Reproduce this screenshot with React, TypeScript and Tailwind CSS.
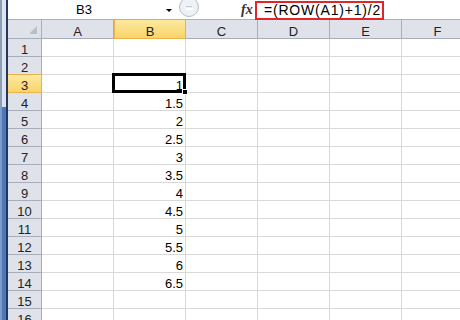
const cols = ["A", "B", "C", "D", "E", "F"];

const values: Record<number, string> = {
  3: "1",
  4: "1.5",
  5: "2",
  6: "2.5",
  7: "3",
  8: "3.5",
  9: "4",
  10: "4.5",
  11: "5",
  12: "5.5",
  13: "6",
  14: "6.5",
};

const rows = Array.from({ length: 16 }, (_, i) => i + 1);

const FormulaBar = () => (
  <div className="flex h-[20px] items-start">
    <div className="flex h-full items-start border-b border-[#a9b2bd]">
      <div className="w-[152px] text-center text-[13px] leading-[20px] text-black">B3</div>
      <div className="ml-[6px] mt-[9px] h-0 w-0 border-x-[3px] border-t-[3px] border-x-transparent border-t-black" />
      <div className="ml-[7px] -mt-[3px] flex h-[20px] w-[20px] items-center justify-center rounded-full border border-[#b4bdc8] bg-[#eef1f5]">
        <div className="mt-[1px] flex flex-col items-center gap-[1px]">
          <div className="h-[1px] w-[6px] bg-[#c4cad2]" />
          <div className="h-[2px] w-[7px] bg-white" />
        </div>
      </div>
      <div className="ml-[42px] w-[14px] font-['Liberation_Serif',serif] text-[14px] font-bold italic leading-[19px] text-[#333]">
        fx
      </div>
    </div>
    <div className="mt-[1px] flex h-[19px] w-[129px] items-center border-2 border-[#e2242b] bg-white pl-[7px] text-[14px] tracking-[0.8px] text-black">
      =(ROW(A1)+1)/2
    </div>
    <div className="h-full flex-1 border-b border-[#a9b2bd]" />
  </div>
);

const Grid = () => (
  <div className="grid grid-cols-[34px_repeat(6,72px)] grid-rows-[19px_repeat(16,18px)]">
    <div className="relative border-r border-b border-[#a5aeba] bg-[#dfe3e9]">
      <div className="absolute right-[4px] bottom-[4px] h-0 w-0 border-t-[8px] border-t-transparent border-r-[8px] border-r-[#b9c0c9]" />
    </div>
    {cols.map((c) =>
      c === "B" ? (
        <div
          key={c}
          className="flex items-end justify-center border-x border-b border-[#eab24c] bg-gradient-to-b from-[#fde99f] to-[#f9d468] text-[13px] leading-[12px] text-[#222]"
        >
          {c}
        </div>
      ) : (
        <div
          key={c}
          className="flex items-end justify-center border-r border-b border-[#a5aeba] bg-[#dfe3e9] text-[13px] leading-[12px] text-[#222]"
        >
          {c}
        </div>
      )
    )}
    {rows.map((r) => (
      <Row key={r} r={r} />
    ))}
  </div>
);

const Row = ({ r }: { r: number }) => (
  <>
    {r === 3 ? (
      <div className="-mt-[1px] flex items-end justify-center border-y border-r border-[#eab24c] bg-gradient-to-b from-[#fde99f] to-[#f9d468] text-[13px] leading-[12px] text-[#222]">
        {r}
      </div>
    ) : (
      <div className="flex items-end justify-center border-r border-b border-[#a5aeba] bg-[#dfe3e9] text-[13px] leading-[12px] text-[#222]">
        {r}
      </div>
    )}
    {cols.map((c) => (
      <div
        key={c}
        className="relative flex items-end justify-end border-r border-b border-[#d9d9d9] pr-[2px] text-[13px] leading-[12px] text-black"
      >
        {c === "B" ? values[r] : null}
        {c === "B" && r === 3 && (
          <>
            <div className="absolute -top-[2px] -left-[2px] -right-[1px] -bottom-[1px] z-10 border-[3px] border-black" />
            <div className="absolute -right-[3px] -bottom-[3px] z-20 h-[6px] w-[6px] border border-white bg-black" />
          </>
        )}
      </div>
    ))}
  </>
);

const App = () => (
  <div className="flex h-[320px] w-[460px] overflow-hidden bg-white font-['Liberation_Sans',Arial,sans-serif]">
    <div className="flex w-[8px] shrink-0 flex-col">
      <div className="h-[107px] border-l-2 border-r-2 border-l-[#8d9db6] border-r-[#26375a] bg-[#dae3ef]" />
      <div className="flex-1 border-l-2 border-r-2 border-l-[#7d9ccc] border-r-[#1f3566] bg-[#4f76b5]" />
    </div>
    <div className="flex min-w-0 flex-1 flex-col">
      <FormulaBar />
      <div className="h-[2px]" />
      <Grid />
    </div>
  </div>
);

export default App;
